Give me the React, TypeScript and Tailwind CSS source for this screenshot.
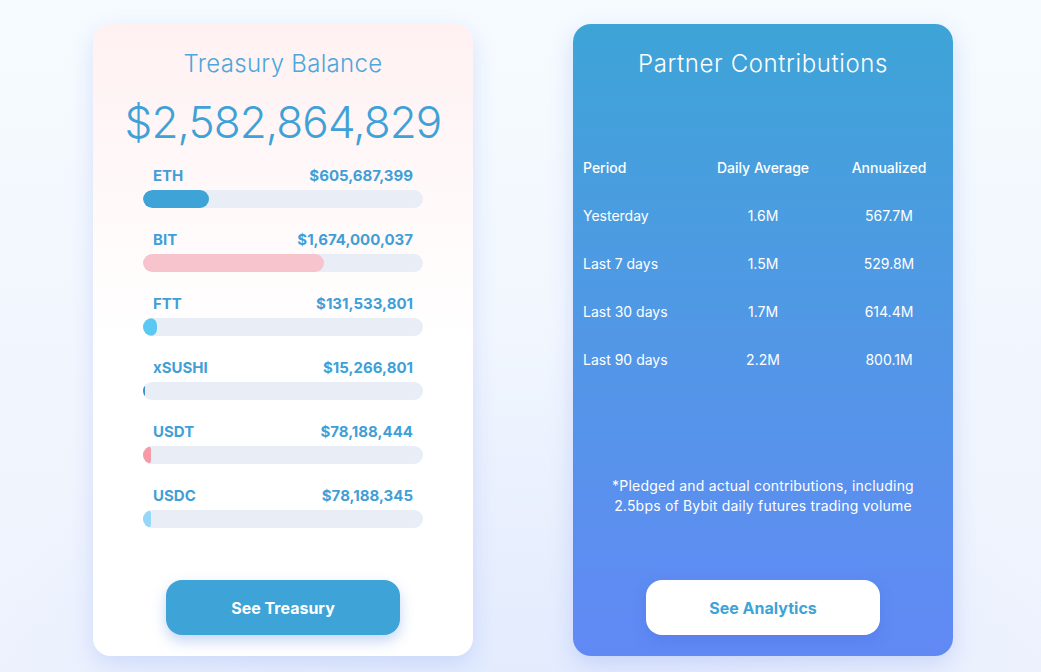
import React from "react";

const assets = [
  { name: "ETH", value: "$605,687,399", pct: 23.4, color: "bg-[#3ea3d6]" },
  { name: "BIT", value: "$1,674,000,037", pct: 64.8, color: "bg-[#f7c3cc]" },
  { name: "FTT", value: "$131,533,801", pct: 5.1, color: "bg-[#5bc8f4]" },
  { name: "xSUSHI", value: "$15,266,801", pct: 0.6, color: "bg-[#3e8fc4]" },
  { name: "USDT", value: "$78,188,444", pct: 3.0, color: "bg-[#f59aa6]" },
  { name: "USDC", value: "$78,188,345", pct: 3.0, color: "bg-[#94d7f8]" },
];

const rows = [
  ["Yesterday", "1.6M", "567.7M"],
  ["Last 7 days", "1.5M", "529.8M"],
  ["Last 30 days", "1.7M", "614.4M"],
  ["Last 90 days", "2.2M", "800.1M"],
];

export default function App() {
  return (
    <div
      className="relative min-h-screen w-full overflow-hidden bg-gradient-to-b from-[#f6fbff] to-[#edf2fd]"
      style={{ fontFamily: "Inter, 'Noto Sans', sans-serif" }}
    >
      <div className="pointer-events-none absolute left-1/2 top-[330px] h-[760px] w-[1100px] -translate-x-1/2 rounded-full bg-[radial-gradient(closest-side,rgba(225,234,253,0.9),rgba(225,234,253,0))]" />

      <div className="relative flex justify-center gap-[100px] pl-[5px] pt-6">
        {/* treasury card */}
        <div className="flex h-[632px] w-[380px] flex-col items-center rounded-[18px] bg-gradient-to-b from-[#fff1f2] via-white to-white pt-[24px] shadow-[0_8px_22px_rgba(110,140,240,0.22)]">
          <h2 className="text-[24px] font-light leading-8 tracking-[0.3px] text-[#4ba7dc]">
            Treasury Balance
          </h2>
          <div className="mt-[16px] text-[44px] font-light leading-[52px] tracking-[-0.9px] text-[#3ea1d8]">
            $2,582,864,829
          </div>

          <div className="mt-[18px] flex w-[280px] flex-col gap-[22px]">
            {assets.map((a) => (
              <div key={a.name}>
                <div className="flex justify-between px-[10px] text-[15px] font-bold leading-5 text-[#3f9fd6]">
                  <span>{a.name}</span>
                  <span>{a.value}</span>
                </div>
                <div className="mt-1 h-[18px] w-full overflow-hidden rounded-full bg-[#e9edf5]">
                  <div
                    className={`h-full rounded-full ${a.color}`}
                    style={{ width: `${a.pct}%` }}
                  />
                </div>
              </div>
            ))}
          </div>

          <button className="mb-[21px] mt-auto h-[55px] w-[234px] rounded-[16px] bg-[#3ea3d6] text-[16px] font-bold text-white shadow-[0_6px_14px_rgba(62,120,214,0.3)]">
            See Treasury
          </button>
        </div>

        {/* partner card */}
        <div className="flex h-[632px] w-[380px] flex-col items-center rounded-[18px] bg-gradient-to-b from-[#3da4d7] to-[#6189f5] pt-[24px] text-white shadow-[0_8px_22px_rgba(110,140,240,0.25)]">
          <h2 className="text-[24px] font-light leading-8 tracking-[0.6px]">Partner Contributions</h2>

          <div className="mt-[77px] w-full px-[10px] text-[14px]">
            <div className="grid h-5 grid-cols-[118px_124px_128px] items-center font-medium">
              <span>Period</span>
              <span className="text-center">Daily Average</span>
              <span className="text-center">Annualized</span>
            </div>
            {rows.map((r) => (
              <div key={r[0]} className="mt-7 grid h-5 grid-cols-[118px_124px_128px] items-center">
                <span>{r[0]}</span>
                <span className="text-center">{r[1]}</span>
                <span className="text-center">{r[2]}</span>
              </div>
            ))}
          </div>

          <p className="mt-[107px] text-center text-[14px] leading-5 tracking-[0.2px]">
            *Pledged and actual contributions, including
            <br />
            2.5bps of Bybit daily futures trading volume
          </p>

          <button className="mb-[21px] mt-auto h-[55px] w-[234px] rounded-[16px] bg-white text-[16px] font-bold text-[#3ea3d6] shadow-[0_6px_14px_rgba(62,100,214,0.25)]">
            See Analytics
          </button>
        </div>
      </div>
    </div>
  );
}
